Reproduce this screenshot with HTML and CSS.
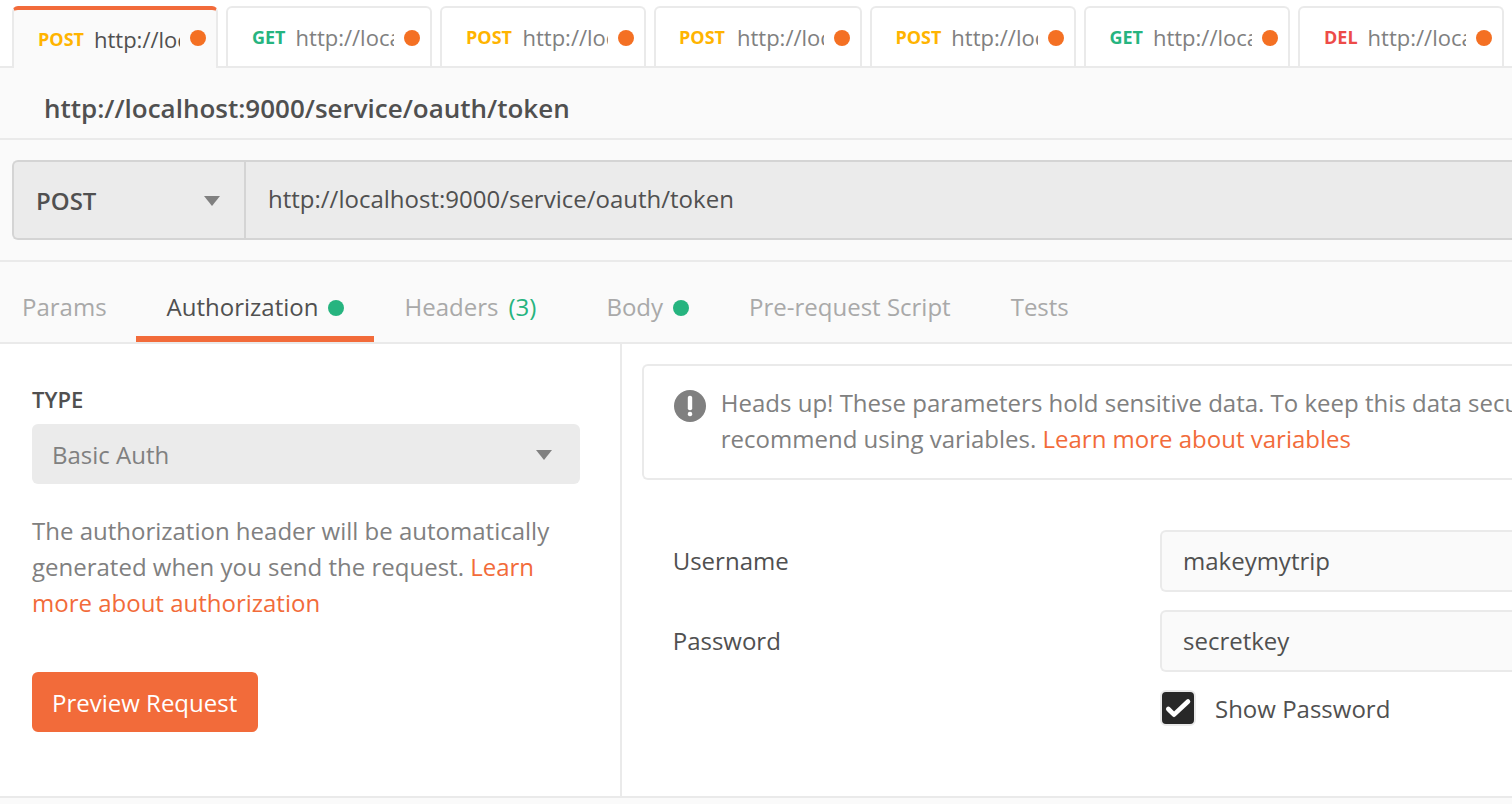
FILE: index.html
```html
<!DOCTYPE html>
<html lang="en">
<head>
<meta charset="utf-8">
<title>Request builder</title>
<link rel="stylesheet" href="styles.css">
</head>
<body>
<div class="app">
  <nav class="tabs">
    <div class="tab active"><span class="method post">POST</span><span class="tab-url">http://loc</span><i class="dot unsaved"></i></div>
    <div class="tab"><span class="method get">GET</span><span class="tab-url">http://loca</span><i class="dot unsaved"></i></div>
    <div class="tab"><span class="method post">POST</span><span class="tab-url near">http://loc</span><i class="dot unsaved"></i></div>
    <div class="tab wide"><span class="method post">POST</span><span class="tab-url far">http://loc</span><i class="dot unsaved"></i></div>
    <div class="tab snug"><span class="method post">POST</span><span class="tab-url">http://loc</span><i class="dot unsaved"></i></div>
    <div class="tab snug"><span class="method get">GET</span><span class="tab-url">http://loca</span><i class="dot unsaved"></i></div>
    <div class="tab"><span class="method del">DEL</span><span class="tab-url">http://loca</span><i class="dot unsaved"></i></div>
  </nav>
  <header class="request-name"><span>http://localhost:9000/service/oauth/token</span></header>
  <section class="url-section">
    <div class="url-bar">
      <div class="method-select"><span>POST</span><svg class="caret" width="16" height="10" viewBox="0 0 16 10"><path d="M0 0h16L8 10z"/></svg></div>
      <div class="url-input">http://localhost:9000/service/oauth/token</div>
    </div>
  </section>
  <nav class="sections">
    <div class="section first"><span>Params</span></div>
    <div class="section selected"><span>Authorization</span><i class="dot set"></i></div>
    <div class="section headers"><span>Headers</span><span class="count">(3)</span></div>
    <div class="section"><span>Body</span><i class="dot set"></i></div>
    <div class="section"><span>Pre-request Script</span></div>
    <div class="section"><span>Tests</span></div>
  </nav>
  <main class="auth">
    <aside class="auth-type">
      <div class="label">TYPE</div>
      <div class="select"><span>Basic Auth</span><svg class="caret" width="16" height="10" viewBox="0 0 16 10"><path d="M0 0h16L8 10z"/></svg></div>
      <p class="help">The authorization header will be automatically<br>generated when you send the request. <a>Learn<br>more about authorization</a></p>
      <div class="button">Preview Request</div>
    </aside>
    <div class="auth-form">
      <div class="notice">
        <svg class="alert" width="32" height="32" viewBox="0 0 32 32"><circle cx="16" cy="16" r="16"/><rect x="13.8" y="5.8" width="4.4" height="14.4" rx="2"/><rect x="13.8" y="21.8" width="4.4" height="4.4" rx="2"/></svg>
        <p>Heads up! These parameters hold sensitive data. To keep this data secure while working, we<br>recommend using variables. <a>Learn more about variables</a></p>
      </div>
      <div class="fields">
        <span class="field-label">Username</span><div class="field">makeymytrip</div>
        <span class="field-label">Password</span><div class="field">secretkey</div>
        <div class="check-row">
          <span class="checkbox"><svg width="32" height="32" viewBox="0 0 32 32"><path d="M6.3 17l5.7 5.7L26 9.5"/></svg></span>
          <span>Show Password</span>
        </div>
      </div>
    </div>
  </main>
  <footer class="response"></footer>
</div>
</body>
</html>
```
FILE: styles.css
```css
* { box-sizing: border-box; }
body {
  margin: 0;
  overflow: hidden;
  background: #fafafa;
  color: #505050;
  font-family: "Open Sans", "Noto Sans", sans-serif;
  font-size: 24px;
}
.app { width: 1512px; height: 804px; overflow: hidden; display: flex; flex-direction: column; white-space: nowrap; }
a { color: #f26b3a; }
.dot { width: 16px; height: 16px; border-radius: 50%; flex: none; }
.unsaved { background: #f47023; }
.set { background: #26b47f; margin: 4px 0 0 10px; }
.caret { fill: #808080; }

.tabs { height: 68px; flex: none; display: flex; gap: 8px; padding: 6px 0 0 12px; background: #fff; box-shadow: inset 0 -2px #eaeaea; }
.tab {
  width: 206px; height: 60px; flex: none;
  display: flex; align-items: center;
  padding: 0 10px 0 24px;
  border: 2px solid #eaeaea; border-bottom: 0;
  border-radius: 6px 6px 0 0;
  background: #fff; color: #808080;
}
.tab .unsaved { margin-top: 2px; }
.tab.wide, .tab.snug { padding-left: 23px; }
.tab.snug { padding-left: 23.4px; }
.tab.wide { width: 208px; }
.tab.active { height: 62px; border-top: 4px solid #f26b3a; background: #fafafa; color: #505050; }
.tab.active .unsaved { margin: 0 0 2px; }
.method { font-size: 18px; font-weight: 700; flex: none; }
.post { color: #ffb400; }
.get { color: #26b47f; }
.del { color: #ed4b48; }
.tab-url { flex: 1; min-width: 0; overflow: hidden; margin: 0 10px; font-size: 22px; }
.tab-url.near { margin-left: 10.5px; }
.tab-url.far { margin-left: 12px; }

.request-name { height: 72px; flex: none; padding: 12px 44px 0; line-height: 56px; font-size: 26px; font-weight: 600; letter-spacing: -0.01px; border-bottom: 2px solid #eaeaea; }

.url-section { height: 122px; flex: none; padding: 20px 0 20px 12px; border-bottom: 2px solid #eaeaea; }
.url-bar { height: 80px; display: flex; border: 2px solid #d4d4d4; border-right: 0; border-radius: 6px 0 0 6px; background: #ebebeb; }
.method-select { width: 232px; flex: none; display: flex; align-items: center; justify-content: space-between; padding: 0 24px 0 22px; border-right: 2px solid #d4d4d4; font-weight: 600; }
.method-select .caret { margin-top: 2px; }
.url-input { flex: 1; padding-left: 22px; line-height: 73px; }

.sections { height: 82px; flex: none; display: flex; border-bottom: 2px solid #eaeaea; color: #a9a9a9; }
.section { display: flex; align-items: center; padding: 14px 30px 0; border-bottom: 6px solid transparent; }
.section.first { width: 136px; padding-left: 22px; }
.section.selected { width: 238px; padding-left: 30.6px; padding-right: 0; color: #505050; border-bottom-color: #f26b3a; }
.section.selected .set { margin-left: 9.4px; }
.section.headers { padding-left: 30.6px; padding-right: 40px; }
.section .set { margin-left: 10.4px; }
.section:nth-child(4) { padding-right: 29.6px; }
.count { color: #26b47f; margin-left: 10px; }

.auth { height: 452px; flex: none; display: flex; background: #fff; }
.auth-type { width: 622px; flex: none; padding: 40px 40px 0 32px; border-right: 2px solid #eaeaea; }
.label { height: 40px; line-height: 30px; font-size: 22px; font-weight: 600; }
.select { height: 60px; display: flex; align-items: center; justify-content: space-between; padding: 0 28px 0 20px; border-radius: 6px; background: #ebebeb; color: #808080; }
.select .caret { margin-top: 2px; }
p { margin: 0; line-height: 36px; color: #808080; }
.help { margin-top: 29px; }
.button { width: 226px; height: 60px; margin-top: 51px; padding: 0 20px; line-height: 62px; border-radius: 6px; background: #f26b3a; color: #fff; }

.auth-form { flex: 1; min-width: 0; padding: 20px 0 0 20px; }
.notice { height: 116px; display: flex; gap: 14.8px; padding: 19px 0 0 30px; border: 2px solid #eaeaea; border-right: 0; border-radius: 6px 0 0 6px; overflow: hidden; }
.alert { margin-top: 5px; flex: none; fill: #808080; }
.alert rect { fill: #fff; }
.fields { display: grid; grid-template-columns: 487.3px 1fr; row-gap: 18px; align-items: center; padding: 50px 0 0 30.7px; }
.field-label { padding-bottom: 2px; }
.field { height: 62px; padding-left: 21px; line-height: 58px; border: 2px solid #eaeaea; border-right: 0; border-radius: 6px 0 0 6px; background: #fafafa; }
.check-row { grid-column: 2; display: flex; align-items: center; gap: 19px; height: 36px; }
.checkbox { width: 36px; height: 36px; border: 2px solid #eaeaea; border-radius: 6px; background: #282828; }
.checkbox svg { display: block; fill: none; stroke: #fff; stroke-width: 4.6; stroke-linecap: round; stroke-linejoin: round; }
.response { height: 8px; flex: none; border-top: 2px solid #eaeaea; background: #fafafa; }
```
